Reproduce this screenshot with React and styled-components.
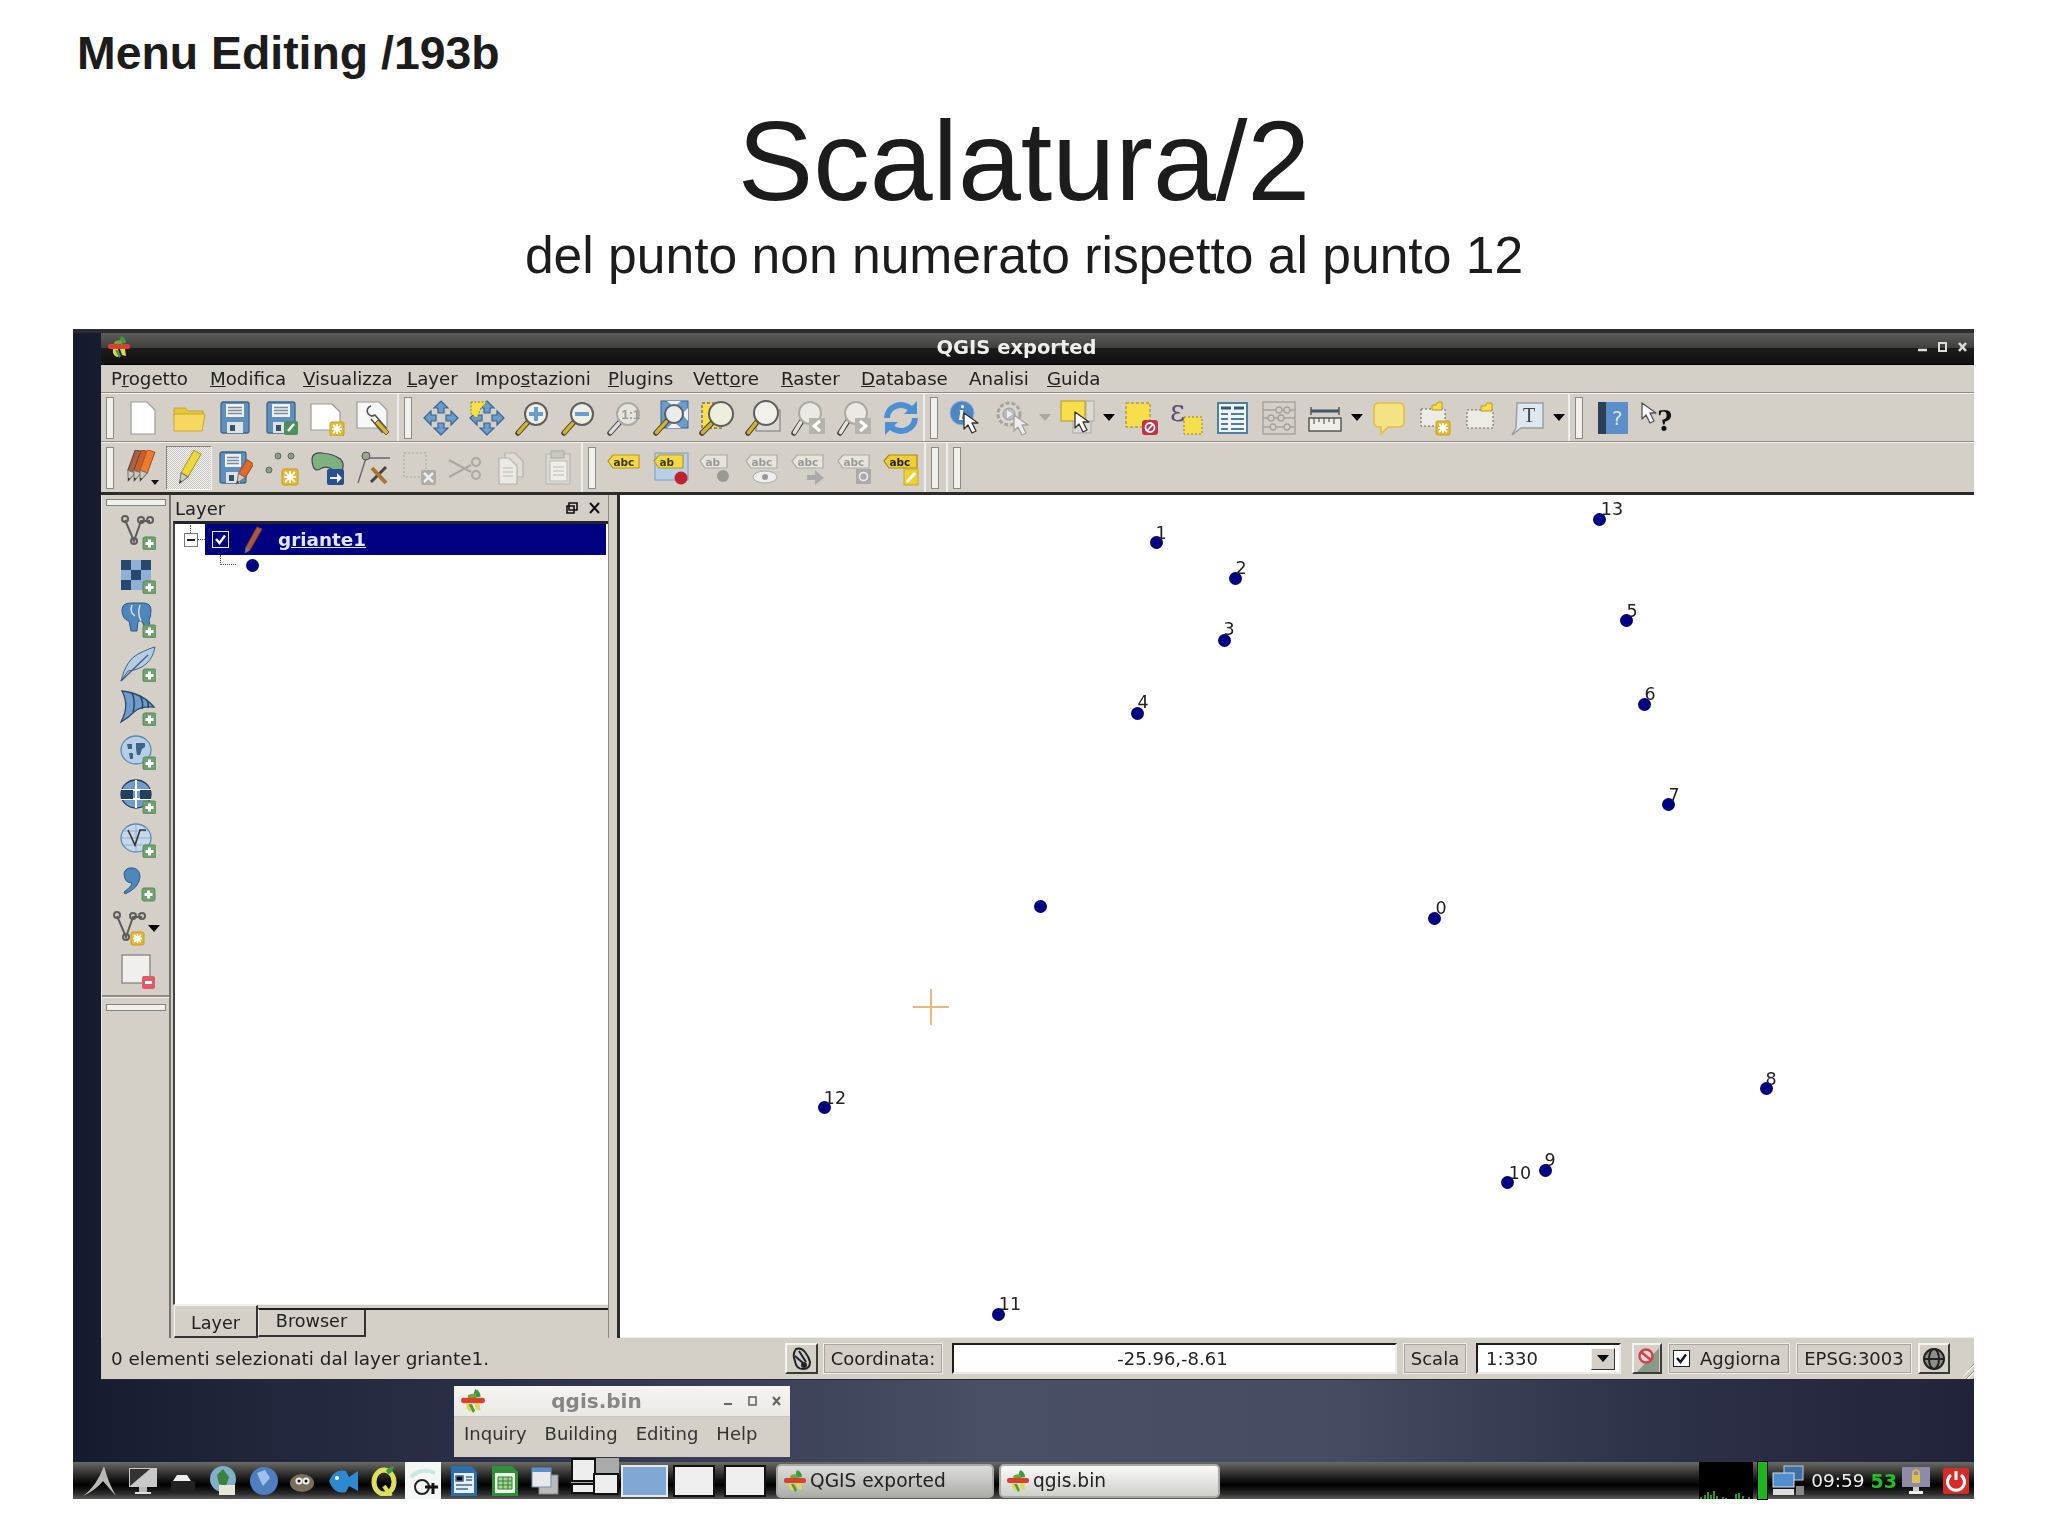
import React from "react";
import styled, { createGlobalStyle } from "styled-components";

const GlobalStyle = createGlobalStyle`
  html, body { margin: 0; padding: 0; background: #fff; }
  body { font-family: "Liberation Sans", Arial, sans-serif; }
`;

const qtFont = `"DejaVu Sans", "Liberation Sans", sans-serif`;
const GREY = "#d4d0c8";

const Slide = styled.div`
  width: 2048px;
  height: 1535px;
  overflow: hidden;
  display: flex;
  flex-direction: column;
`;
const Heading = styled.div`
  margin: 26px 0 0 77px;
  font-size: 46.4px;
  line-height: 54px;
  font-weight: bold;
  color: #1c1c1c;
`;
const Title = styled.h1`
  margin: 21px 0 0;
  font-size: 113.2px;
  line-height: 120px;
  font-weight: normal;
  text-align: center;
  color: #1c1c1c;
`;
const Subtitle = styled.div`
  margin-top: 4px;
  font-size: 51.6px;
  line-height: 60px;
  text-align: center;
  color: #1c1c1c;
`;
const Screen = styled.div`
  margin: 44px 0 0 73px;
  width: 1901px;
  height: 1170px;
  display: flex;
  flex-direction: column;
  border-top: 4px solid #2c2c30;
  box-sizing: border-box;
  background: linear-gradient(90deg, #151a2f 0, #1f2439 8%, #2b3049 22%, #494f65 48%, #474c62 66%, #2e324a 82%, #20233a 100%);
  font-family: ${qtFont};
  color: #222;
  filter: blur(0.6px);
`;

/* main window */
const Win = styled.div`
  margin-left: 28px;
  width: 1873px;
  height: 1047px;
  display: flex;
  flex-direction: column;
  background: ${GREY};
  flex: none;
`;
const TitleBar = styled.div`
  height: 32px;
  flex: none;
  display: flex;
  align-items: center;
  padding: 0 6px 3px 6px;
  background: linear-gradient(#5c5c5a 0, #3f3f3d 48%, #1c1c1c 50%, #101010 100%);
  border-bottom: 1px solid #000;
  box-sizing: border-box;
`;
const WinTitle = styled.div`
  flex: 1;
  text-align: center;
  padding-right: ${(p) => p.$pr}px;
  color: ${(p) => p.$color || "#eee"};
  font-weight: bold;
  font-size: ${(p) => p.$size || 19.5}px;
`;
const Controls = styled.div`
  display: flex;
  align-items: center;
`;
const MenuBar = styled.div`
  height: 28px;
  flex: none;
  display: flex;
  align-items: center;
  padding-left: 10px;
  font-size: 18.2px;
  border-bottom: 1px solid #8f8c85;
  box-sizing: border-box;
`;
const MenuItem = styled.span`
  flex: none;
  width: ${(p) => p.$w}px;
`;
const ToolRow = styled.div`
  flex: none;
  height: ${(p) => p.$h}px;
  display: flex;
  border-bottom: ${(p) => (p.$last ? "3px solid #2b2b2a" : "1px solid #8f8c85")};
  box-sizing: ${(p) => (p.$last ? "content-box" : "border-box")};
`;
const Group = styled.div`
  flex: ${(p) => (p.$w ? "none" : 1)};
  width: ${(p) => p.$w}px;
  display: flex;
  align-items: center;
  padding-left: 3px;
  box-sizing: border-box;
  border-top: 1px solid #f4f2ee;
  border-right: ${(p) => (p.$w ? "2px solid #f0eeea" : "none")};
`;
const Grip = styled.div`
  flex: none;
  width: 6px;
  height: 40px;
  margin: 0 6px 0 2px;
  border: 1px solid #8a8a84;
  background: #f2f0ec;
`;
const Tool = styled.div`
  flex: none;
  width: ${(p) => p.$w || 46}px;
  height: 44px;
  display: flex;
  align-items: center;
  justify-content: center;
  box-sizing: border-box;
  ${(p) =>
    p.$on &&
    `background: repeating-conic-gradient(#f1f0ee 0 25%, #c9c7c1 0 50%) 0 0 / 2px 2px;
     border: 1px solid; border-color: #85837d #f6f5f2 #f6f5f2 #85837d;`}
`;
const DropSlot = styled.div`
  flex: none;
  width: 18px;
  display: flex;
  justify-content: center;
`;
const Arrow = styled.div`
  width: 0;
  height: 0;
  border-left: 6px solid transparent;
  border-right: 6px solid transparent;
  border-top: 7px solid ${(p) => p.$color || "#000"};
`;

const Main = styled.div`
  flex: none;
  height: 843px;
  display: flex;
`;
const LeftDock = styled.div`
  flex: none;
  width: 70px;
  display: flex;
  flex-direction: column;
  align-items: center;
  border-right: 2px solid #77756f;
  border-left: 1px solid #eeece7;
  box-sizing: border-box;
`;
const HGrip = styled.div`
  flex: none;
  width: 58px;
  height: 5px;
  border: 1px solid #85837d;
  background: #f2f0ec;
  margin: ${(p) => p.$m};
`;
const LeftSlot = styled.div`
  flex: none;
  box-sizing: border-box;
  width: 100%;
  height: 44px;
  padding-left: ${(p) => p.$pl ?? 4}px;
  display: flex;
  align-items: center;
  justify-content: center;
`;
const LeftRule = styled.div`
  flex: none;
  width: 100%;
  height: 2px;
  background: #8f8c85;
  border-bottom: 1px solid #f4f2ee;
  margin-top: 1px;
`;
const LayerDock = styled.div`
  flex: none;
  width: 437px;
  display: flex;
  flex-direction: column;
`;
const DockHead = styled.div`
  flex: none;
  height: 26px;
  display: flex;
  align-items: center;
  padding: 0 6px 0 4px;
  font-size: 18px;
`;
const DockName = styled.div`
  flex: 1;
`;
const Tree = styled.div`
  flex: 1;
  margin-left: 2px;
  background: #fff;
  border-top: 3px solid #23232b;
  border-left: 2px solid #444;
  border-bottom: 1px solid #eee;
`;
const TreeRow = styled.div`
  height: 31px;
  display: flex;
  align-items: center;
`;
const Expander = styled.div`
  position: relative;
  width: 12px;
  height: 12px;
  margin-left: 9px;
  border: 1px solid #777;
  background: #fff;
  display: flex;
  align-items: center;
  justify-content: center;
  &::before {
    content: "";
    width: 8px;
    height: 2px;
    background: #222;
  }
  &::after {
    content: "";
    position: absolute;
    left: 5px;
    top: -9px;
    height: 8px;
    border-left: 1px dotted #555;
  }
`;
const Dots = styled.div`
  border-top: 1px dotted #555;
  width: ${(p) => p.$w}px;
`;
const LegendElbow = styled.div`
  width: 15px;
  height: 9px;
  border-left: 1px dotted #555;
  border-bottom: 1px dotted #555;
`;
const Selected = styled.div`
  flex: 1;
  height: 100%;
  margin-right: 2px;
  background: #000080;
  display: flex;
  align-items: center;
  padding-left: 7px;
`;
const Check = styled.div`
  flex: none;
  width: 15px;
  height: 15px;
  border: 1px solid ${(p) => p.$b || "#eee"};
  display: flex;
  align-items: center;
  justify-content: center;
  background: ${(p) => p.$bg || "transparent"};
`;
const LayerName = styled.span`
  margin-left: 15px;
  color: #e2e6ff;
  font-weight: bold;
  font-size: 18.4px;
  text-decoration: underline;
`;
const LegendRow = styled.div`
  height: 26px;
  display: flex;
  align-items: flex-start;
  padding-left: 45px;
`;
const LegendDot = styled.div`
  width: 13px;
  height: 13px;
  margin: 4px 0 0 10px;
  border-radius: 50%;
  background: #000080;
`;
const TabBar = styled.div`
  flex: none;
  height: 33px;
  display: flex;
  align-items: flex-start;
  padding-left: 3px;
`;
const TabLine = styled.div`
  flex: 1;
  height: 2px;
  margin-top: 3px;
  margin-left: -2px;
  background: #1e1e1e;
`;
const Tab = styled.div`
  flex: none;
  box-sizing: border-box;
  width: ${(p) => p.$w}px;
  height: ${(p) => (p.$on ? 33 : 29)}px;
  margin-top: ${(p) => (p.$on ? 0 : 3)}px;
  font-size: 17.6px;
  text-align: center;
  line-height: ${(p) => (p.$on ? 35 : 23)}px;
  border-left: 1px solid #f4f2ee;
  border-top: ${(p) => (p.$on ? "1px solid #f4f2ee" : "2px solid #1e1e1e")};
  border-right: 2px solid #333;
  border-bottom: 2px solid #333;
`;
const Splitter = styled.div`
  flex: none;
  width: 12px;
  border-right: 3px solid #2c2c2e;
  border-left: 1px solid #8f8c85;
  box-sizing: border-box;
`;
const MapCanvas = styled.div`
  flex: 1;
  position: relative;
  background: #fff;
  font-size: 17.5px;
  color: #222;
  border-bottom: 1px solid #f0eeea;
`;
const Dot = styled.div`
  position: absolute;
  left: ${(p) => p.$x - 620 - 6}px;
  top: ${(p) => p.$y - 494 - 6}px;
  width: 13px;
  height: 13px;
  border-radius: 50%;
  background: #000080;
`;
const PointLabel = styled.div`
  position: absolute;
  left: ${(p) => p.$x - 620}px;
  top: ${(p) => p.$y - 493}px;
  transform: translate(-50%, -50%);
  line-height: 1;
`;
const Cross = styled.div`
  position: absolute;
  left: ${931 - 620 - 18}px;
  top: ${1006 - 494 - 18}px;
  width: 36px;
  height: 36px;
  background:
    linear-gradient(#e9b87c, #e9b87c) center / 100% 2px no-repeat,
    linear-gradient(#e9b87c, #e9b87c) center / 2px 100% no-repeat;
`;

const StatusBar = styled.div`
  flex: none;
  height: 41px;
  display: flex;
  align-items: center;
  font-size: 18px;
  border-bottom: 1px solid #2a2a2a;
`;
const Message = styled.div`
  flex: none;
  width: 684px;
  padding-left: 10px;
  box-sizing: border-box;
  font-size: 18.4px;
`;
const Cell = styled.div`
  flex: none;
  box-sizing: border-box;
  width: ${(p) => p.$w}px;
  margin-left: ${(p) => p.$ml || 0}px;
  height: 31px;
  display: flex;
  align-items: center;
  gap: 8px;
  justify-content: ${(p) => p.$align || "center"};
  border: 1px solid #f0eeea;
  outline: 1px solid #a9a69f;
  outline-offset: -2px;
`;
const IconBtn = styled(Cell)`
  border: 2px solid;
  outline: none;
  border-color: #f5f3ef #3a3a38 #3a3a38 #f5f3ef;
`;
const Field = styled(Cell)`
  background: #fff;
  outline: none;
  border: 2px solid;
  border-color: #1d1d1d #eeece7 #eeece7 #1d1d1d;
  padding: 0 4px 0 ${(p) => (p.$align ? 8 : 0)}px;
`;
const ComboText = styled.div`
  flex: 1;
`;
const ComboBtn = styled.div`
  width: 22px;
  height: 20px;
  background: ${GREY};
  border: 1px solid;
  border-color: #f5f3ef #333 #333 #f5f3ef;
  display: flex;
  align-items: center;
  justify-content: center;
`;
const SizeGrip = styled.div`
  flex: 1;
  align-self: flex-end;
  height: 16px;
  margin-left: 6px;
  background: repeating-linear-gradient(135deg, transparent 0 3px, #8a8a84 3px 4px, #f4f2ee 4px 5px);
  clip-path: polygon(100% 0, 100% 100%, 30% 100%);
`;

/* popup and task bar */
const DesktopRow = styled.div`
  flex: 1;
  padding: 6px 0 0 381px;
`;
const Popup = styled.div`
  width: 336px;
  height: 71px;
  background: linear-gradient(#f6f5f2, #dbd8d1);
  display: flex;
  flex-direction: column;
`;
const PopupHead = styled.div`
  height: 31px;
  flex: none;
  display: flex;
  align-items: center;
  padding: 0 9px 0 6px;
  border-bottom: 1px solid #c9c6be;
  box-sizing: border-box;
`;
const PopupMenu = styled(MenuBar)`
  height: 40px;
  border: none;
  padding-bottom: 8px;
  background: ${GREY};
  font-size: 18px;
  color: #333;
  gap: 18px;
`;
const Taskbar = styled.div`
  flex: none;
  height: 37px;
  display: flex;
  align-items: center;
  background: linear-gradient(#6a6a67 0, #3c3c3a 25%, #111 50%, #000 62%, #2a2a2a 85%, #5b5b58 100%);
`;
const TaskSlot = styled.div`
  flex: none;
  width: ${(p) => p.$w}px;
  margin-left: ${(p) => p.$ml}px;
  height: 100%;
  display: flex;
  align-items: center;
  justify-content: center;
  background: ${(p) => p.$bg || "transparent"};
`;
const PagerBox = styled.div`
  flex: none;
  box-sizing: border-box;
  width: ${(p) => p.$w}px;
  margin-left: ${(p) => p.$ml}px;
  height: 32px;
  background: ${(p) => p.$bg || "#efefef"};
  border: 2px solid ${(p) => p.$b || "#111"};
`;
const TaskButton = styled.div`
  flex: none;
  box-sizing: border-box;
  width: ${(p) => p.$w}px;
  margin-left: ${(p) => p.$ml}px;
  height: 34px;
  display: flex;
  align-items: center;
  gap: 3px;
  padding-left: 5px;
  border: 2px solid #a9a9a3;
  border-radius: 5px;
  font-size: 18.6px;
  color: #222;
  background: ${(p) => p.$bg};
`;
const Tray = styled.div`
  flex: 1;
  height: 100%;
  display: flex;
  align-items: center;
  justify-content: flex-end;
  padding-right: 5px;
`;
const Graph = styled.div`
  flex: none;
  width: 54px;
  height: 100%;
  background: #000;
  display: flex;
  align-items: flex-end;
`;
const Level = styled.div`
  flex: none;
  width: 9px;
  height: 100%;
  margin: 0 4px;
  background: #1fb51f;
  border: 1px solid #000;
`;
const Clock = styled.span`
  color: #eee;
  font-size: 18.5px;
  margin: 0 6px 0 7px;
`;
const Secs = styled.span`
  color: #1fc01f;
  font-weight: bold;
  font-size: 19px;
  margin-right: 4px;
`;
const TraySpace = styled.span`
  flex: none;
  width: 12px;
`;

/* drawings */
const Svg = ({ s = 36, vb = 36, children }) => (
  <svg width={s} height={s} viewBox={`0 0 ${vb} ${vb}`} style={{ display: "block", flex: "none" }}>
    {children}
  </svg>
);
const B1 = "#6a9cce";
const B2 = "#39658f";
const Y1 = "#f6df4a";
const Page = ({ x = 6, y = 2, w = 24, h = 32, f = "#fff", st = "#9a9a96" }) => (
  <path d={`M${x} ${y}h${w - 8}l8 8v${h - 8}h${-w}z`} fill={f} stroke={st} strokeWidth="1.2" />
);
const Plus = ({ x = 23, y = 23 }) => (
  <g>
    <rect x={x} y={y} width="13" height="13" rx="2" fill="#71a171" stroke="#5a8a5a" />
    <path d={`M${x + 6.5} ${y + 2.5}v8M${x + 2.5} ${y + 6.5}h8`} stroke="#fff" strokeWidth="3" />
  </g>
);
const Star = ({ x = 22, y = 22, s = 13 }) => (
  <g>
    <rect x={x} y={y} width={s} height={s} rx="2" fill="#e8b92e" stroke="#c79c22" />
    <path
      d={`M${x + s / 2} ${y + 2}v${s - 4}M${x + 2} ${y + s / 2}h${s - 4}M${x + 3} ${y + 3}l${s - 6} ${s - 6}M${x + s - 3} ${y + 3}l${6 - s} ${s - 6}`}
      stroke="#fff"
      strokeWidth="1.8"
    />
  </g>
);
const Mag = ({ cx = 21, cy = 14, r = 11, f = "#efefe6", st = "#5f5f5f", h = "#d4b32a" }) => (
  <g>
    <path d={`M${cx - r * 0.75} ${cy + r * 0.75}L3 33`} stroke="#444" strokeWidth="5.5" strokeLinecap="round" />
    <path d={`M${cx - r * 0.85} ${cy + r * 0.85}L3.5 32.5`} stroke={h} strokeWidth="3.5" strokeLinecap="round" />
    <circle cx={cx} cy={cy} r={r} fill={f} stroke={st} strokeWidth="2" />
  </g>
);
const Cursor = ({ x = 16, y = 14, f = "#fff", st = "#333" }) => (
  <path
    d={`M${x} ${y}l0 16 4-4 4 8 4-2-4-8 6 0z`}
    fill={f}
    stroke={st}
    strokeWidth="1.3"
    strokeLinejoin="round"
  />
);
const Floppy = ({ w = 28, x = 4 }) => (
  <g>
    <rect x={x} y="2" width={w} height="31" rx="2" fill="#5f8fbd" stroke="#3d6488" strokeWidth="1.3" />
    <rect x={x + 5} y="4" width={w - 10} height="13" fill="#eef1f4" />
    <path d={`M${x + 7} 7.5h${w - 14}M${x + 7} 10.5h${w - 14}M${x + 7} 13.5h${w - 14}`} stroke="#7c8b99" strokeWidth="1.4" />
    <rect x={x + 6} y="22" width={w - 12} height="11" fill="#dfe2e5" />
    <rect x={x + 9} y="25" width="5" height="6" fill="#39536e" />
  </g>
);
const Vec = ({ st = "#5d5d5d" }) => (
  <g fill="none" stroke={st} strokeWidth="2">
    <path d="M5 6L14 27L21 7H30" />
    <circle cx="5" cy="5" r="3" />
    <circle cx="14" cy="27" r="3" />
    <circle cx="21" cy="6" r="3" />
    <circle cx="30" cy="6" r="3" />
  </g>
);
const PanArrows = () => (
  <g fill={B1} stroke={B2} strokeWidth="1.2">
    {[0, 90, 180, 270].map((a) => (
      <path key={a} d="M18 1l7 7h-4v5h-6V8h-4z" transform={`rotate(${a} 18 18)`} />
    ))}
  </g>
);
const Tag = ({ f = "#f3d948", st = "#b59a22", c = "#3a3a1a", t = "abc", w = 26 }) => (
  <g>
    <path d={`M1 11l5-6h${w}v13H6z`} fill={f} stroke={st} strokeWidth="1.2" />
    <text x="6.5" y="16" fontFamily="'DejaVu Sans', sans-serif" fontSize="10.5" fontWeight="bold" fill={c}>
      {t}
    </text>
  </g>
);
const Pencil = ({ x = 18, y = 18, f = "#e8d23c", d = "#b79e20", rot = 28, len = 26 }) => (
  <g transform={`rotate(${rot} ${x} ${y})`}>
    <rect x={x - 4} y={y - len / 2} width="8" height={len - 8} fill={f} stroke={d} />
    <path d={`M${x - 4} ${y + len / 2 - 8}h8l-4 10z`} fill="#cfc9b6" stroke="#777" />
    <path d={`M${x - 1.2} ${y + len / 2 - 1}h2.4l-1.2 3z`} fill="#333" />
  </g>
);
const Globe = ({ f = "#b5cfe8", st = "#5f87ad" }) => (
  <ellipse cx="16" cy="16" rx="15" ry="14" fill={f} stroke={st} strokeWidth="1.3" />
);

const ICONS = {
  new: <Page />,
  open: (
    <g>
      <path d="M3 8h11l3 3h15v6H3z" fill="#e8c53f" stroke="#c8a52a" />
      <path d="M3 31V14h31l-3 17z" fill="#f6d860" stroke="#c8a52a" />
    </g>
  ),
  save: <Floppy />,
  saveas: (
    <g>
      <Floppy />
      <rect x="21" y="21" width="14" height="14" rx="2" fill="#4f8f5f" />
      <path d="M25 31l6-7" stroke="#fff" strokeWidth="2.5" />
    </g>
  ),
  newfrom: (
    <g>
      <Page x={2} y={4} w={29} h={26} />
      <Star x={21} y={22} s={14} />
    </g>
  ),
  wrench: (
    <g>
      <Page x={2} y={2} w={30} h={26} f="#f8f8f8" />
      <path d="M16 6a5 5 0 1 0 4 9l11 13-4 4-11-13" fill="none" stroke="#555" strokeWidth="1.6" />
      <path d="M23 20l11 12-3 3-11-12z" fill="#d8b93a" stroke="#665c2a" />
    </g>
  ),
  pan: <PanArrows />,
  pansel: (
    <g>
      <PanArrows />
      <path d="M2 2h16l-6 6-4 10-6-4z" fill={Y1} stroke="#8f7f20" strokeDasharray="2 1.5" />
    </g>
  ),
  zoomin: (
    <g>
      <Mag />
      <path d="M21 7v14M14 14h14" stroke={B1} strokeWidth="4" />
    </g>
  ),
  zoomout: (
    <g>
      <Mag />
      <path d="M14 14h14" stroke={B1} strokeWidth="4" />
    </g>
  ),
  zoom11: (
    <g>
      <Mag st="#aaa" f="#e6e4dc" h="#ddd" />
      <text x="14.5" y="19" fontSize="13" fontWeight="bold" fontFamily="'Liberation Sans'" fill="#9a9a94">
        1:1
      </text>
    </g>
  ),
  zoomfull: (
    <g>
      <rect x="8" y="1" width="27" height="27" fill={B1} stroke={B2} />
      <path d="M14 1l7 6 7-6M35 8l-6 6 6 7M14 28l7-6 7 6" fill="#eef2f6" stroke="none" />
      <Mag cx={21} cy={14} r={9} f="#e9ecec" />
    </g>
  ),
  zoomsel: (
    <g>
      <rect x="3" y="3" width="20" height="25" fill={Y1} stroke="#444" strokeDasharray="3 2" />
      <Mag cx={22} cy={14} r={12} f="#eeeedc" />
    </g>
  ),
  zoomlayer: (
    <g>
      <rect x="11" y="10" width="24" height="21" fill="#d9d7d0" stroke="#777" />
      <Mag cx={21} cy={13} r={12} f="#f1f0ea" />
    </g>
  ),
  zoomlast: (
    <g>
      <Mag cx={19} cy={13} r={11} st="#aaa" f="#ebe9e2" h="#e4e2da" />
      <rect x="18" y="18" width="16" height="16" fill="#b5b3ad" />
      <path d="M29 21l-6 5 6 5" fill="none" stroke="#fff" strokeWidth="3" />
    </g>
  ),
  zoomnext: (
    <g>
      <Mag cx={19} cy={13} r={11} st="#aaa" f="#ebe9e2" h="#e4e2da" />
      <rect x="18" y="18" width="16" height="16" fill="#b5b3ad" />
      <path d="M23 21l6 5-6 5" fill="none" stroke="#fff" strokeWidth="3" />
    </g>
  ),
  refresh: (
    <g fill="none" stroke="#4c8fd4" strokeWidth="6">
      <path d="M4 18a14 13 0 0 1 24-9" />
      <path d="M32 18a14 13 0 0 1-24 9" />
      <path d="M34 1v13H21z" fill="#4c8fd4" stroke="none" />
      <path d="M2 35V22h13z" fill="#4c8fd4" stroke="none" />
    </g>
  ),
  identify: (
    <g>
      <circle cx="13" cy="13" r="12" fill="#4f86c2" stroke="#8fb2d8" />
      <text x="9.5" y="20" fontSize="20" fontWeight="bold" fontStyle="italic" fontFamily="'Liberation Serif'" fill="#fff">
        i
      </text>
      <Cursor x={15} y={13} />
    </g>
  ),
  action: (
    <g>
      <circle cx="14" cy="14" r="11" fill="#d9d7d0" stroke="#a5a39c" strokeWidth="3" strokeDasharray="4 2" />
      <circle cx="14" cy="14" r="6" fill="#bbb" stroke="#999" />
      <path d="M12 10l6 4-6 4z" fill="#eee" />
      <Cursor x={19} y={15} st="#a5a39c" f="#eee" />
    </g>
  ),
  select: (
    <g>
      <rect x="14" y="20" width="18" height="13" fill="#dcdad4" stroke="#a9a79f" />
      <rect x="27" y="1" width="8" height="20" fill="#dcdad4" stroke="#a9a79f" />
      <rect x="2" y="1" width="24" height="20" fill={Y1} stroke="#b59a22" />
      <Cursor x={16} y={12} />
    </g>
  ),
  deselect: (
    <g>
      <rect x="3" y="3" width="24" height="24" fill={Y1} stroke="#8f7f20" strokeDasharray="3 2" />
      <rect x="19" y="20" width="16" height="15" rx="3" fill="#c73048" />
      <circle cx="27" cy="27.5" r="4.5" fill="none" stroke="#fff" strokeWidth="1.8" />
      <path d="M24 31l6-7" stroke="#fff" strokeWidth="1.8" />
    </g>
  ),
  expr: (
    <g>
      <text x="1" y="21" fontSize="29" fontFamily="'DejaVu Serif', serif" fill="#5d4d78">
        ε
      </text>
      <rect x="15" y="17" width="18" height="17" fill={Y1} stroke="#8f7f20" strokeDasharray="2 2" />
    </g>
  ),
  table: (
    <g>
      <rect x="3" y="3" width="29" height="30" fill="#f2f6fa" stroke="#4d7ea8" strokeWidth="2" />
      <path d="M6 8h10M19 8h10" stroke="#31597d" strokeWidth="3" />
      <path d="M6 14h7M16 14h13M6 19h7M16 19h13M6 24h7M16 24h13M6 29h7M16 29h13" stroke="#4d7ea8" strokeWidth="1.8" />
    </g>
  ),
  calc: (
    <g fill="none" stroke="#a5a39c" strokeWidth="1.4">
      <rect x="2" y="2" width="32" height="32" />
      <path d="M2 10h32M2 18h32M2 27h32" />
      <circle cx="18" cy="10" r="3" fill={GREY} />
      <circle cx="26" cy="10" r="3" fill={GREY} />
      <circle cx="10" cy="18" r="3" fill={GREY} />
      <circle cx="20" cy="18" r="3" fill={GREY} />
      <circle cx="12" cy="27" r="3" fill={GREY} />
      <circle cx="26" cy="27" r="3" fill={GREY} />
    </g>
  ),
  ruler: (
    <g>
      <path d="M4 11h28" stroke="#3d5568" strokeWidth="3" />
      <path d="M4 7v8M32 7v8" stroke="#555" strokeWidth="1.5" />
      <rect x="2" y="18" width="32" height="13" fill="#efeee8" stroke="#444" strokeWidth="1.3" />
      <path d="M7 18v6M12 18v4M17 18v6M22 18v4M27 18v6" stroke="#444" />
    </g>
  ),
  tip: (
    <path
      d="M8 3h20q5 0 5 5v14q0 5-5 5H17l-7 7v-7H8q-5 0-5-5V8q0-5 5-5z"
      fill="#f4e384"
      stroke="#e0bf40"
      strokeWidth="1.6"
    />
  ),
  bookmarks: (
    <g>
      <rect x="4" y="9" width="24" height="17" fill="#ecebe5" stroke="#666" strokeDasharray="2 2" />
      <path d="M15 10V5h4l2-3h4v8z" fill={Y1} stroke="#b59a22" />
      <Star x={19} y={21} s={14} />
    </g>
  ),
  bookmark: (
    <g>
      <rect x="4" y="10" width="26" height="18" fill="#ecebe5" stroke="#666" strokeDasharray="2 2" />
      <path d="M18 11V6h4l2-3h5v8z" fill={Y1} stroke="#b59a22" />
    </g>
  ),
  annot: (
    <g>
      <path d="M8 3h26v25H12l-9 7 4-7z" fill="#dfe8f0" stroke="#9a9c9c" strokeWidth="1.4" />
      <text x="14" y="22" fontSize="20" fontFamily="'Liberation Serif'" fill="#444">
        T
      </text>
    </g>
  ),
  help: (
    <g>
      <rect x="4" y="2" width="30" height="32" fill="#5b8fc9" />
      <rect x="4" y="2" width="8" height="32" fill="#2b4057" />
      <text x="18" y="25" fontSize="20" fontFamily="'DejaVu Sans'" fill="#d8e4f0">
        ?
      </text>
    </g>
  ),
  whats: (
    <g>
      <Cursor x={2} y={3} f="#fff" st="#555" />
      <text x="17" y="31" fontSize="32" fontWeight="bold" fontFamily="'Liberation Serif'" fill="#111">
        ?
      </text>
    </g>
  ),
  pencils: (
    <g>
      <Pencil x={9} y={15} f="#a8604a" d="#6b3a2a" rot={20} len={30} />
      <Pencil x={15} y={15} f="#c9602e" d="#84401e" rot={20} len={30} />
      <Pencil x={21} y={15} f="#ee7a2a" d="#a75420" rot={20} len={30} />
      <path d="M26 30h8l-4 5z" fill="#111" />
    </g>
  ),
  pencil: <Pencil x={18} y={17} f="#ecd83f" d="#b09a20" rot={30} len={34} />,
  savelayer: (
    <g>
      <Floppy w={26} x={3} />
      <Pencil x={27} y={22} f="#e06a28" d="#a5481a" rot={32} len={24} />
    </g>
  ),
  addpoint: (
    <g>
      <g fill="#8d9d88" stroke="#5d6d5a">
        <circle cx="15" cy="6" r="3" />
        <circle cx="28" cy="6" r="3" />
        <circle cx="6" cy="20" r="3" />
      </g>
      <Star x={19} y={19} s={16} />
    </g>
  ),
  addshape: (
    <g>
      <path d="M3 10q0-8 10-7t15 4q7 3 6 10t-10 3q-6-5-13-1t-8-9z" fill="#7fb07f" stroke="#445" strokeWidth="1.2" />
      <rect x="18" y="19" width="17" height="16" rx="2" fill="#294f8f" />
      <path d="M21 27h7v-4l5 5-5 5v-4h-7z" fill="#eef" />
    </g>
  ),
  nodes: (
    <g>
      <path d="M3 33L11 8h24" fill="none" stroke="#667" strokeWidth="1.4" />
      <circle cx="11" cy="6" r="4" fill="#9aa88e" stroke="#555" />
      <path d="M16 32l15-15" stroke="#444" strokeWidth="3" />
      <path d="M17 18l14 15" stroke="#a8742e" strokeWidth="4" />
    </g>
  ),
  delsel: (
    <g>
      <rect x="3" y="3" width="22" height="24" fill="none" stroke="#b5b3ad" strokeWidth="1.5" strokeDasharray="2 2" />
      <rect x="20" y="20" width="15" height="15" rx="2" fill="#aeaca6" />
      <path d="M23 23l9 9M32 23l-9 9" stroke="#eee" strokeWidth="2.5" />
    </g>
  ),
  cut: (
    <g fill="none" stroke="#aaa8a2" strokeWidth="2">
      <path d="M2 10l22 12M2 27l22-12" />
      <circle cx="29" cy="12" r="4" />
      <circle cx="29" cy="25" r="4" />
    </g>
  ),
  copy: (
    <g>
      <Page x={12} y={3} w={18} h={24} f="#dedcd5" st="#b5b3ad" />
      <Page x={6} y={8} w={18} h={26} f="#ebe9e3" st="#b5b3ad" />
      <path d="M10 18h10M10 22h10M10 26h10" stroke="#bdbbb5" />
    </g>
  ),
  paste: (
    <g>
      <rect x="7" y="4" width="24" height="30" fill="#dad8d1" stroke="#b5b3ad" />
      <rect x="12" y="1" width="13" height="7" fill="#c9c7c0" stroke="#aaa" />
      <rect x="11" y="11" width="17" height="20" fill="#f0eee8" stroke="#bbb" />
      <path d="M14 17h11M14 21h11M14 25h11" stroke="#bbb" />
    </g>
  ),
  lab1: <Tag />,
  lab2: (
    <g>
      <rect x="2" y="3" width="33" height="27" fill="#b8cfe6" stroke="#7a9cc0" />
      <Tag t="ab" w={24} />
      <circle cx="28" cy="28" r="6.5" fill="#c22030" />
    </g>
  ),
  lab3: (
    <g>
      <Tag f="#e6e4dd" st="#aaa" c="#9a9a94" t="ab" w={22} />
      <circle cx="24" cy="26" r="6" fill="#9a9a94" />
    </g>
  ),
  lab4: (
    <g>
      <Tag f="#e6e4dd" st="#aaa" c="#9a9a94" />
      <ellipse cx="20" cy="27" rx="12" ry="6" fill="#eee" stroke="#aaa" />
      <circle cx="20" cy="27" r="3" fill="#999" />
    </g>
  ),
  lab5: (
    <g>
      <Tag f="#e6e4dd" st="#aaa" c="#9a9a94" />
      <path d="M16 25h8v-5l9 8-9 7v-5h-8z" fill="#aaa" />
    </g>
  ),
  lab6: (
    <g>
      <Tag f="#e6e4dd" st="#aaa" c="#9a9a94" />
      <rect x="19" y="19" width="15" height="15" fill="#aaa" />
      <circle cx="26.5" cy="26.5" r="4" fill="none" stroke="#eee" strokeWidth="1.6" />
    </g>
  ),
  lab7: (
    <g>
      <Tag f="#efd033" st="#a58a18" c="#222" w={28} />
      <rect x="21" y="19" width="14" height="16" fill="#efd033" stroke="#c5a824" />
      <path d="M24 32l8-9" stroke="#fff" strokeWidth="3" />
    </g>
  ),
  vAdd: (
    <g>
      <Vec />
      <Plus />
    </g>
  ),
  rAdd: (
    <g>
      <rect x="1" y="2" width="30" height="30" fill="#8fb0d4" />
      <path d="M1 2h10v10H1zM21 2h10v10H21zM11 12h10v10H11zM1 22h10v10H1z" fill="#27496d" />
      <Plus />
    </g>
  ),
  pgAdd: (
    <g>
      <path d="M2 8q0-7 9-7h12q8 0 8 7 0 7-2 10l1 6h-6l-2-5-4 0-1 10h-6L9 19Q2 17 2 8z" fill="#4f86bb" stroke="#2f5a85" />
      <path d="M12 3q-3 7 3 11M20 3q-3 8 1 16" fill="none" stroke="#dbe6f0" strokeWidth="1.4" />
      <Plus />
    </g>
  ),
  featherAdd: (
    <g>
      <path d="M1 35Q6 14 18 8T35 1Q33 12 26 18T8 25z" fill="#b7cde3" stroke="#3d6488" />
      <path d="M1 35L28 9" stroke="#3d6488" strokeWidth="1.4" />
      <Plus />
    </g>
  ),
  sailAdd: (
    <g>
      <path d="M2 1Q22 3 34 17Q20 16 14 22T1 32Q10 16 2 1z" fill="#6f9cc9" stroke="#274a6d" strokeWidth="1.3" />
      <path d="M12 3q4 9 1 19M20 6q4 6 2 13M27 10q2 4 1 8" fill="none" stroke="#274a6d" strokeWidth="1.6" />
      <Plus />
    </g>
  ),
  wmsAdd: (
    <g>
      <Globe />
      <path d="M7 10h5v5H8zM16 9h9v4l-3 2-2 6h-3l-1-6zM9 19h4v6h-3z" fill="#3d6488" />
      <Plus />
    </g>
  ),
  wfsAdd: (
    <g>
      <Globe f="#6f9cc9" st="#1f3a55" />
      <path d="M1 12h30M1 21h30M16 2v28" stroke="#fff" strokeWidth="2" />
      <path d="M1 12h12v9H1zM20 12h11v9H20z" fill="#22405e" />
      <Plus />
    </g>
  ),
  vglobeAdd: (
    <g>
      <Globe f="#c6d8ea" />
      <path d="M4 9h24M2 16h28M4 23h24M16 2v28" stroke="#8fb0d0" />
      <path d="M8 8l7 15 5-15h6" fill="none" stroke="#333" strokeWidth="1.6" />
      <Plus />
    </g>
  ),
  commaAdd: (
    <g>
      <path d="M4 7q2-6 9-5t7 9q-1 11-15 17l-1-2q8-6 8-9-8 0-8-10z" fill="#4f86bb" stroke="#2f5a85" />
      <Plus x={22} y={22} />
    </g>
  ),
  vNew: (
    <g>
      <Vec />
      <Star x={19} y={22} s={13} />
    </g>
  ),
  remove: (
    <g>
      <rect x="2" y="1" width="28" height="28" fill="#f0efeb" stroke="#8a8a84" strokeWidth="1.4" />
      <rect x="22" y="22" width="13" height="13" rx="2" fill="#e25a6a" />
      <path d="M25 28.5h7" stroke="#fff" strokeWidth="3" />
    </g>
  ),
};

const Icon = ({ name, s = 36 }) => <Svg s={s}>{ICONS[name]}</Svg>;

const QgisLogo = ({ s = 24 }) => (
  <Svg s={s} vb={24}>
    <path d="M14 1q5 2 5 7l-6 1q-1-4 1-8z" fill="#3d9a3d" />
    <path d="M7 7q4-3 8-1l-1 5H8z" fill="#6ea83a" />
    <rect x="1" y="9" width="22" height="5" rx="2" fill="#d94030" />
    <path d="M6 14q-1 6 4 8l3-1-2-7zM13 14l2 6 4 1-1-7z" fill="#dbd85a" />
    <path d="M8 15l4 8 2-2-3-6z" fill="#4f9a3d" />
  </Svg>
);

const CheckMark = ({ c }) => (
  <svg width="13" height="13" viewBox="0 0 13 13" style={{ display: "block" }}>
    <path d="M2 6l3.5 4L11 2.5" fill="none" stroke={c} strokeWidth="2.4" />
  </svg>
);

const TOOL_ROW_1 = [
  { w: 298, items: ["new", "open", "save", "saveas", "newfrom", "wrench"] },
  {
    w: 526,
    items: ["pan", "pansel", "zoomin", "zoomout", "zoom11", "zoomfull", "zoomsel", "zoomlayer", "zoomlast", "zoomnext", "refresh"],
  },
  {
    w: 645,
    items: ["identify", "action", "^gray", "select", "^", "deselect", "expr", "table", "calc", "ruler", "^", "tip", "bookmarks", "bookmark", "annot", "^"],
  },
  { items: ["help", "whats"] },
];
const TOOL_ROW_2 = [
  {
    w: 482,
    items: ["pencils", "*pencil", "savelayer", "addpoint", "addshape", "nodes", "delsel", "cut", "copy", "paste"],
  },
  { w: 343, items: ["lab1", "lab2", "lab3", "lab4", "lab5", "lab6", "lab7"] },
  { w: 22, items: [] },
  { items: [] },
];
const LEFT_ICONS = ["vAdd", "rAdd", "pgAdd", "featherAdd", "sailAdd", "wmsAdd", "wfsAdd", "vglobeAdd", "commaAdd"];

const POINTS = [
  { x: 1156, y: 541, t: "1", lx: 1161, ly: 532 },
  { x: 1235, y: 577, t: "2", lx: 1241, ly: 567 },
  { x: 1224, y: 639, t: "3", lx: 1229, ly: 628 },
  { x: 1137, y: 712, t: "4", lx: 1143, ly: 701 },
  { x: 1599, y: 518, t: "13", lx: 1612, ly: 508 },
  { x: 1626, y: 619, t: "5", lx: 1632, ly: 610 },
  { x: 1644, y: 703, t: "6", lx: 1650, ly: 693 },
  { x: 1668, y: 803, t: "7", lx: 1674, ly: 794 },
  { x: 1040, y: 905 },
  { x: 1434, y: 917, t: "0", lx: 1441, ly: 907 },
  { x: 824, y: 1106, t: "12", lx: 835, ly: 1097 },
  { x: 1766, y: 1087, t: "8", lx: 1771, ly: 1078 },
  { x: 1545, y: 1169, t: "9", lx: 1550, ly: 1159 },
  { x: 1507, y: 1181, t: "10", lx: 1520, ly: 1172 },
  { x: 998, y: 1313, t: "11", lx: 1010, ly: 1303 },
];

const MENUS = [
  ["P", "r", "ogetto", 99],
  ["", "M", "odifica", 93],
  ["", "V", "isualizza", 104],
  ["", "L", "ayer", 68],
  ["Impo", "s", "tazioni", 133],
  ["", "P", "lugins", 85],
  ["Vett", "o", "re", 88],
  ["", "R", "aster", 80],
  ["", "D", "atabase", 108],
  ["Analisi", "", "", 78],
  ["", "G", "uida", 60],
];

const ToolItem = ({ item }) => {
  if (item === "^") return <DropSlot><Arrow /></DropSlot>;
  if (item === "^gray") return <DropSlot><Arrow $color="#a9a79f" /></DropSlot>;
  if (item[0] === "*") return <Tool $on><Icon name={item.slice(1)} /></Tool>;
  return <Tool><Icon name={item} /></Tool>;
};

const Toolbar = ({ groups, h, last }) => (
  <ToolRow $h={h} $last={last}>
    {groups.map((g, i) => (
      <Group key={i} $w={g.w}>
        <Grip />
        {g.items.map((it, j) => (
          <ToolItem key={j} item={it} />
        ))}
      </Group>
    ))}
  </ToolRow>
);

const TaskIcon = ({ kind }) => {
  switch (kind) {
    case "arch":
      return (
        <Svg s={36} vb={36}>
          <path d="M1 33Q14 24 22 3q4 16 12 30-8-9-13-15Q14 27 1 33z" fill="#b9b9b5" />
        </Svg>
      );
    case "monitor":
      return (
        <Svg s={30} vb={30}>
          <rect x="1" y="2" width="28" height="19" fill="#c9c9c9" />
          <path d="M2 20L22 3H2z" fill="#333" />
          <rect x="11" y="21" width="8" height="5" fill="#bbb" />
          <rect x="7" y="26" width="16" height="2" fill="#ddd" />
        </Svg>
      );
    case "scanner":
      return (
        <Svg s={28} vb={28}>
          <rect x="2" y="14" width="24" height="11" rx="2" fill="#222" />
          <path d="M4 14l4-6h10l4 6z" fill="#eee" />
        </Svg>
      );
    case "earth":
      return (
        <Svg s={30} vb={30}>
          <ellipse cx="15" cy="13" rx="13" ry="13" fill="#7fb0c9" />
          <path d="M9 9l6-6 6 8-3 9-7-2z" fill="#3d7f3d" />
          <rect x="11" y="19" width="16" height="10" fill="#e8e6da" />
        </Svg>
      );
    case "globe":
      return (
        <Svg s={30} vb={30}>
          <circle cx="15" cy="15" r="14" fill="#4f7fc0" />
          <path d="M8 7l8-3 5 8-7 8-3-6z" fill="#9fc0e8" />
        </Svg>
      );
    case "gimp":
      return (
        <Svg s={28} vb={28}>
          <ellipse cx="14" cy="16" rx="12" ry="9" fill="#7a6f5f" />
          <circle cx="11" cy="14" r="3.5" fill="#eee" />
          <circle cx="18" cy="14" r="3.5" fill="#eee" />
          <circle cx="11" cy="14" r="1.5" fill="#111" />
          <circle cx="18" cy="14" r="1.5" fill="#111" />
        </Svg>
      );
    case "fish":
      return (
        <Svg s={32} vb={32}>
          <path d="M1 16Q6 3 18 6l3 6 9-6v20l-9-5-3 6Q6 30 1 16z" fill="#2e8ad0" />
          <circle cx="9" cy="13" r="2" fill="#fff" />
        </Svg>
      );
    case "q":
      return (
        <Svg s={30} vb={30}>
          <ellipse cx="15" cy="16" rx="10" ry="12" fill="none" stroke="#dfe05a" strokeWidth="5" />
          <path d="M15 20l7 10" stroke="#dfe05a" strokeWidth="4" />
          <path d="M17 5q3-5 8-5-1 7-6 8z" fill="#3d9a3d" />
        </Svg>
      );
    case "capture":
      return (
        <Svg s={32} vb={32}>
          <circle cx="15" cy="22" r="7" fill="none" stroke="#222" strokeWidth="2" />
          <path d="M18 22h13M26 18v11" stroke="#111" strokeWidth="3" />
          <path d="M4 12Q14 2 28 8" fill="none" stroke="#c8e8e0" strokeWidth="4" />
        </Svg>
      );
    case "writer":
      return (
        <Svg s={32} vb={32}>
          <path d="M3 1h20l6 6v24H3z" fill="#2a6fa8" />
          <rect x="6" y="8" width="20" height="20" fill="#e8eef2" />
          <path d="M8 11h7v5H8zM18 12h6M18 15h6M8 20h16M8 24h12" stroke="#3d6e98" strokeWidth="1.6" />
        </Svg>
      );
    case "calc":
      return (
        <Svg s={32} vb={32}>
          <path d="M3 1h20l6 6v24H3z" fill="#2f8f3a" />
          <rect x="6" y="8" width="20" height="20" fill="#eef4e8" />
          <path d="M9 12h14v12H9zM9 16h14M9 20h14M14 12v12M19 12v12" fill="#a8d88f" stroke="#2f7f3a" />
        </Svg>
      );
    case "windows":
      return (
        <Svg s={30} vb={30}>
          <rect x="9" y="9" width="19" height="19" fill="#bbb" stroke="#888" />
          <rect x="2" y="2" width="19" height="19" fill="#e8e8e8" stroke="#6f8fb0" />
          <rect x="2" y="2" width="19" height="4" fill="#5b8fc9" />
        </Svg>
      );
    case "pager":
      return (
        <Svg s={48} vb={48}>
          <rect x="0" y="1" width="48" height="36" fill="#aaa" />
          <rect x="1" y="2" width="23" height="22" fill="#eee" stroke="#111" strokeWidth="2" />
          <rect x="1" y="27" width="23" height="9" fill="#eee" stroke="#111" strokeWidth="2" />
          <rect x="23" y="17" width="24" height="20" fill="#eee" stroke="#111" strokeWidth="2" />
        </Svg>
      );
    case "net":
      return (
        <Svg s={32} vb={32}>
          <rect x="12" y="1" width="19" height="14" fill="#3d6fa8" stroke="#ccc" />
          <rect x="1" y="8" width="21" height="14" fill="#4f8fd0" stroke="#ddd" />
          <rect x="1" y="24" width="21" height="6" fill="#ddd" />
          <rect x="24" y="21" width="8" height="9" fill="#888" />
        </Svg>
      );
    case "lock":
      return (
        <Svg s={30} vb={30}>
          <rect x="1" y="1" width="28" height="20" fill="#8f8aa8" />
          <rect x="11" y="9" width="8" height="8" fill="#dcc24a" />
          <path d="M12 9V6q3-4 6 0v3" fill="none" stroke="#dcc24a" strokeWidth="1.6" />
          <rect x="12" y="21" width="6" height="4" fill="#ccc" />
          <rect x="8" y="25" width="14" height="3" fill="#eee" />
        </Svg>
      );
    default:
      return (
        <Svg s={26} vb={26}>
          <rect x="0" y="0" width="26" height="26" rx="2" fill="#d92a2a" />
          <path d="M8 7a8.5 8.5 0 1 0 10 0" fill="none" stroke="#fff" strokeWidth="3" />
          <path d="M13 3v9" stroke="#fff" strokeWidth="3" />
        </Svg>
      );
  }
};

const TASK_ICONS = [
  ["arch", 42, 6],
  ["monitor", 29, 7],
  ["scanner", 25, 13],
  ["earth", 29, 13],
  ["globe", 29, 12],
  ["gimp", 26, 11],
  ["fish", 33, 12],
  ["q", 25, 11],
];
const TASK_ICONS_2 = [
  ["writer", 29, 8],
  ["calc", 29, 12],
  ["windows", 29, 11],
  ["pager", 48, 12],
];

export default function App() {
  return (
    <Slide>
      <GlobalStyle />
      <Heading>Menu Editing /193b</Heading>
      <Title>Scalatura/2</Title>
      <Subtitle>del punto non numerato rispetto al punto 12</Subtitle>
      <Screen>
        <Win>
          <TitleBar>
            <QgisLogo />
            <WinTitle $pr={16}>QGIS exported</WinTitle>
            <Controls>
              <svg width="50" height="12" viewBox="0 0 50 12">
                <path d="M0 9h9" stroke="#ddd" strokeWidth="2.5" />
                <rect x="21" y="2" width="7" height="8" fill="none" stroke="#ddd" strokeWidth="2" />
                <path d="M41 2l7 8M48 2l-7 8" stroke="#ddd" strokeWidth="2.6" />
              </svg>
            </Controls>
          </TitleBar>
          <MenuBar>
            {MENUS.map(([a, u, b, w]) => (
              <MenuItem key={a + u + b} $w={w}>
                {a}
                {u && <u>{u}</u>}
                {b}
              </MenuItem>
            ))}
          </MenuBar>
          <Toolbar groups={TOOL_ROW_1} h={49} />
          <Toolbar groups={TOOL_ROW_2} h={50} last />
          <Main>
            <LeftDock>
              <HGrip $m="4px 0 4px" />
              {LEFT_ICONS.map((n) => (
                <LeftSlot key={n}>
                  <Icon name={n} />
                </LeftSlot>
              ))}
              <LeftSlot $pl={0}>
                <Icon name="vNew" />
                <Arrow />
              </LeftSlot>
              <LeftSlot>
                <Icon name="remove" />
              </LeftSlot>
              <LeftRule />
              <HGrip $m="6px 0 0" />
            </LeftDock>
            <LayerDock>
              <DockHead>
                <DockName>Layer</DockName>
                <svg width="36" height="14" viewBox="0 0 36 14">
                  <path d="M3 2h8v7H3zM1 5h7v7H1z" fill="#d4d0c8" stroke="#111" strokeWidth="1.6" />
                  <path d="M24 2l9 10M33 2l-9 10" stroke="#111" strokeWidth="2" />
                </svg>
              </DockHead>
              <Tree>
                <TreeRow>
                  <Expander />
                  <Dots $w={7} />
                  <Selected>
                    <Check><CheckMark c="#fff" /></Check>
                    <svg width="20" height="28" viewBox="0 0 20 28" style={{ marginLeft: 14 }}>
                      <path d="M14 1l5 2L7 24l-5 3 1-6z" fill="#a85a40" stroke="#7b3f26" />
                      <path d="M3 21l4 3-5 3z" fill="#6b7a9a" />
                    </svg>
                    <LayerName>griante1</LayerName>
                  </Selected>
                </TreeRow>
                <LegendRow>
                  <LegendElbow />
                  <LegendDot />
                </LegendRow>
              </Tree>
              <TabBar>
                <Tab $w={84} $on>Layer</Tab>
                <Tab $w={108}>Browser</Tab>
                <TabLine />
              </TabBar>
            </LayerDock>
            <Splitter />
            <MapCanvas>
              {POINTS.map((p) => (
                <React.Fragment key={`${p.x}-${p.y}`}>
                  <Dot $x={p.x} $y={p.y} />
                  {p.t && <PointLabel $x={p.lx} $y={p.ly}>{p.t}</PointLabel>}
                </React.Fragment>
              ))}
              <Cross />
            </MapCanvas>
          </Main>
          <StatusBar>
            <Message>0 elementi selezionati dal layer griante1.</Message>
            <IconBtn $w={33}>
              <svg width="24" height="26" viewBox="0 0 24 26">
                <path d="M6 3q5-2 9 3t5 10q0 7-7 7T5 15Q2 8 6 3z" fill="#ccc" stroke="#222" strokeWidth="2" />
                <path d="M9 5l7 11M5 10l8 7" stroke="#222" strokeWidth="2" />
                <circle cx="14" cy="19" r="3" fill="#222" />
              </svg>
            </IconBtn>
            <Cell $w={120} $ml={5}>Coordinata:</Cell>
            <Field $w={445} $ml={9}>-25.96,-8.61</Field>
            <Cell $w={64} $ml={6}>Scala</Cell>
            <Field $w={145} $ml={9} $align="flex-start">
              <ComboText>1:330</ComboText>
              <ComboBtn><Arrow /></ComboBtn>
            </Field>
            <IconBtn $w={30} $ml={11}>
              <svg width="24" height="26" viewBox="0 0 24 26">
                <path d="M24 2L2 26h22z" fill="#8a9a88" />
                <circle cx="11" cy="10" r="6.5" fill="#f0d8d8" stroke="#d2404a" strokeWidth="2.4" />
                <path d="M6 6l10 8" stroke="#d2404a" strokeWidth="2.4" />
              </svg>
            </IconBtn>
            <Cell $w={122} $ml={6} $align="flex-start">
              <Check $b="#222" $bg="#fff" style={{ marginLeft: 4 }}><CheckMark c="#111" /></Check>
              <span style={{ marginLeft: 2 }}>Aggiorna</span>
            </Cell>
            <Cell $w={116} $ml={6}>EPSG:3003</Cell>
            <IconBtn $w={32} $ml={6}>
              <svg width="24" height="24" viewBox="0 0 24 24">
                <circle cx="12" cy="12" r="10" fill="#8f8f8a" stroke="#222" strokeWidth="2" />
                <ellipse cx="12" cy="12" rx="5" ry="10" fill="none" stroke="#222" strokeWidth="2" />
                <path d="M2 12h20" stroke="#222" strokeWidth="2" />
              </svg>
            </IconBtn>
            <SizeGrip />
          </StatusBar>
        </Win>
        <DesktopRow>
          <Popup>
            <PopupHead>
              <QgisLogo s={26} />
              <WinTitle $pr={16} $color="#868686" $size={20}>qgis.bin</WinTitle>
              <svg width="58" height="12" viewBox="0 0 58 12">
                <path d="M1 9h8" stroke="#666" strokeWidth="2" />
                <rect x="26" y="2" width="7" height="8" fill="none" stroke="#666" strokeWidth="1.6" />
                <path d="M50 2l7 8M57 2l-7 8" stroke="#666" strokeWidth="2.2" />
              </svg>
            </PopupHead>
            <PopupMenu>
              <span>Inquiry</span>
              <span>Building</span>
              <span>Editing</span>
              <span>Help</span>
            </PopupMenu>
          </Popup>
        </DesktopRow>
        <Taskbar>
          {TASK_ICONS.map(([k, w, ml]) => (
            <TaskSlot key={k} $w={w} $ml={ml}>
              <TaskIcon kind={k} />
            </TaskSlot>
          ))}
          <TaskSlot $w={36} $ml={9} $bg="#f4f7f6">
            <TaskIcon kind="capture" />
          </TaskSlot>
          {TASK_ICONS_2.map(([k, w, ml]) => (
            <TaskSlot key={k} $w={w} $ml={ml}>
              <TaskIcon kind={k} />
            </TaskSlot>
          ))}
          <PagerBox $w={47} $ml={2} $bg="#7fa7d4" $b="#e8e8e8" />
          <PagerBox $w={42} $ml={5} />
          <PagerBox $w={42} $ml={9} />
          <TaskButton $w={218} $ml={10} $bg="linear-gradient(#dcdcd8, #aeaeaa)">
            <QgisLogo />
            QGIS exported
          </TaskButton>
          <TaskButton $w={221} $ml={5} $bg="linear-gradient(#fafafa, #cfcfcb)">
            <QgisLogo />
            qgis.bin
          </TaskButton>
          <Tray>
            <Graph>
              <svg width="54" height="10" viewBox="0 0 54 10">
                <path d="M2 10V8M6 10V6M9 10V3M12 10V6M15 10V2M18 10V7M24 10V8M27 10V9M37 10V5M40 10V4M44 10V7M50 10V8" stroke="#2fd02f" strokeWidth="1.5" />
              </svg>
            </Graph>
            <Level />
            <TaskIcon kind="net" />
            <Clock>09:59</Clock>
            <Secs>53</Secs>
            <TaskIcon kind="lock" />
            <TraySpace />
            <TaskIcon kind="power" />
          </Tray>
        </Taskbar>
      </Screen>
    </Slide>
  );
}
